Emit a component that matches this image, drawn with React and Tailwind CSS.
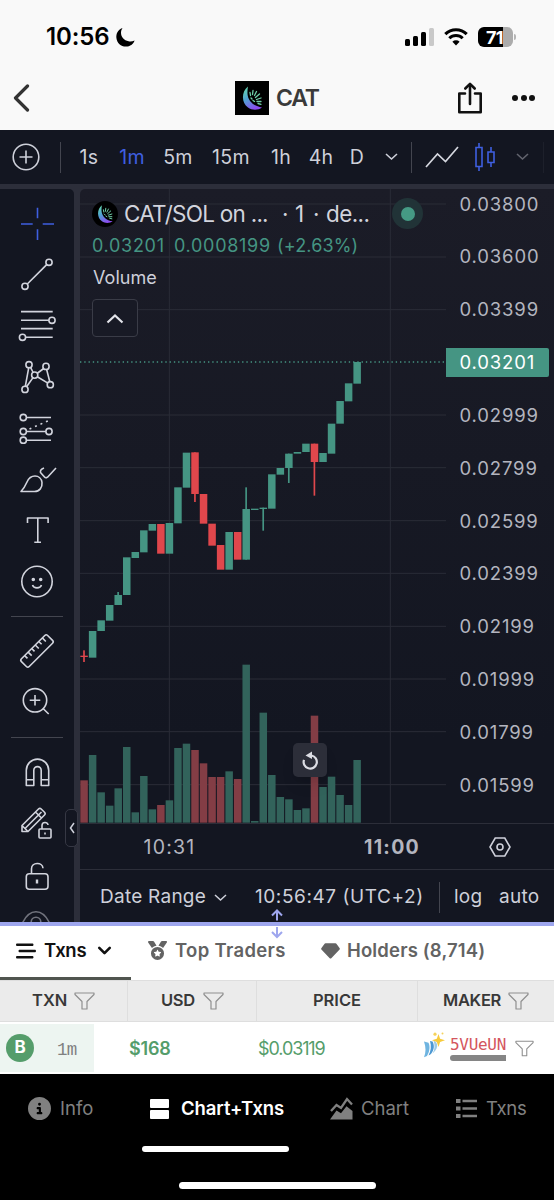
import React from 'react';
import { FaBarsStaggered, FaMedal, FaCircleInfo } from 'react-icons/fa6';
import { ChevronDown } from 'lucide-react';

const INTERVALS = [
  { label: '1s', cls: 'w-[44px]' },
  { label: '1m', cls: 'w-[42px] text-[#3f5fe0]' },
  { label: '5m', cls: 'w-[50px]' },
  { label: '15m', cls: 'w-[56px]' },
  { label: '1h', cls: 'w-[44px]' },
  { label: '4h', cls: 'w-[36px]' },
  { label: 'D', cls: 'w-[36px]' },
];

const PRICES = [
  '0.03800', '0.03600', '0.03399', '0.03201', '0.02999', '0.02799',
  '0.02599', '0.02399', '0.02199', '0.01999', '0.01799', '0.01599',
];

// [up, open/close top, open/close bottom, volume, wick top, wick bottom]
const CANDLES = [
  [0, 947, 951, 127, 931, 966],
  [1, 873, 953, 203],
  [1, 841, 873, 91],
  [1, 795, 842, 51],
  [1, 765, 795, 103, 756, 795],
  [1, 652, 765, 227],
  [1, 636, 654, 31],
  [1, 571, 637, 140],
  [1, 552, 572, 40],
  [0, 552, 641, 53],
  [1, 549, 641, 67],
  [1, 442, 550, 224],
  [1, 338, 443, 237],
  [0, 337, 462, 218, 337, 486],
  [0, 462, 551, 178],
  [0, 551, 617, 137],
  [0, 615, 689, 137],
  [1, 576, 689, 154],
  [0, 576, 659, 131],
  [1, 507, 659, 474, 442, 659],
  [1, 506, 510, 5],
  [1, 503, 507, 330, 503, 572],
  [1, 403, 506, 143],
  [1, 384, 404, 77],
  [1, 341, 384, 70, 341, 429],
  [1, 336, 341, 38],
  [1, 311, 336, 43],
  [0, 311, 366, 321, 311, 467],
  [1, 339, 366, 107],
  [1, 251, 341, 138],
  [1, 183, 251, 83],
  [1, 130, 184, 53],
  [1, 66, 131, 188],
];

const GRID_Y = [-408, -249, -91, 225, 383, 542, 700, 859, 1017, 1175, 1334];

function CatLogo({ className }) {
  return (
    <svg viewBox="0 0 34 34" className={className}>
      <defs>
        <linearGradient id="moon" x1="0" y1="0" x2="0.5" y2="1">
          <stop offset="0" stopColor="#6be0a8" />
          <stop offset="0.5" stopColor="#4fa3d0" />
          <stop offset="1" stopColor="#8a4df0" />
        </linearGradient>
      </defs>
      <rect width="34" height="34" fill="#000" />
      <path d="M13 5.5C6 11 6.500 22 13 26.500c4 3 10 3 14 0C19 25.500 13 20 12.500 13c-.1-3 0-5 .5-7.500z" fill="url(#moon)" />
      <g stroke="#6fd0a8" strokeWidth="1.300" strokeLinecap="round">
        <path d="M15.500 14.500l-.5-3M17.500 13.500l.5-4M19.500 14.500l2-4M20.500 16.500l4-3.500M21.500 18.500l4.500-1.500M22 20.500h4M23 22.500l3 .8M16 17l1 1M18 19.500l1.500 1" />
      </g>
    </svg>
  );
}

function StatusBar() {
  return (
    <div className="flex h-[66px] items-center pt-[8px] text-black">
      <span className="ml-[46px] w-[69px] text-[24px] font-semibold tracking-[-0.1px]">10:56</span>
      <svg width="19" height="19" viewBox="0 0 19 19" className="ml-px">
        <path d="M6.500 0C1.500 2 0 6 .4 10c.6 5 4.600 8.700 9.600 8.600 4 0 7.500-2.500 8.600-6.100-2 .9-4 1.200-6 .8C8 12.500 5 8.800 5 4.800 5 3 5.500 1.500 6.500 0z" />
      </svg>
      <div className="ml-[270px] flex h-[18px] items-end gap-[3px]">
        <span className="h-[7px] w-[5px] rounded-[1.500px] bg-black" />
        <span className="h-[10px] w-[5px] rounded-[1.500px] bg-black" />
        <span className="h-[14px] w-[5px] rounded-[1.500px] bg-black" />
        <span className="h-[18px] w-[5px] rounded-[1.500px] bg-[#c9c9c9]" />
      </div>
      <svg width="24" height="18" viewBox="0 0 24 18" className="ml-[10px]" fill="none" stroke="#000">
        <path d="M1.300 6.200a15.200 15.200 0 0 1 21.400 0" strokeWidth="3.100" />
        <path d="M5.300 10.300a9.600 9.600 0 0 1 13.400 0" strokeWidth="3" />
        <path d="M12 17.500l-3.600-3.700a5.200 5.200 0 0 1 7.200 0z" fill="#000" stroke="none" />
      </svg>
      <div className="ml-[10px] flex h-5 w-[35px] items-center overflow-hidden rounded-[6px] bg-[linear-gradient(90deg,#000_72%,#acacac_72%)] pl-[8px] text-[18px] font-bold tracking-[-0.8px] text-white">
        71
      </div>
      <span className="ml-[1px] h-[6px] w-[2px] rounded-r-full bg-[#b5b5b5]" />
    </div>
  );
}

function NavBar() {
  return (
    <div className="flex h-[64px] items-center">
      <svg width="18" height="28" viewBox="0 0 18 28" className="ml-[13px]" fill="none" stroke="#333" strokeWidth="3.200" strokeLinecap="round" strokeLinejoin="round">
        <path d="M14.500 2L2.500 14l12 12" />
      </svg>
      <CatLogo className="ml-[204px] h-[34px] w-[34px]" />
      <span className="ml-[7px] w-[60px] text-[23px] font-semibold tracking-[-1.200px] text-[#3a3a3a]">CAT</span>
      <svg width="26" height="34" viewBox="0 0 26 34" className="ml-[121px]" fill="none" stroke="#111" strokeWidth="2.600">
        <path d="M8 12.500H2.300v18.700h21.400V12.500H18M13 23V4" strokeLinejoin="round" strokeLinecap="round" />
        <path d="M8.300 7.500L13 2.800l4.700 4.700" strokeLinejoin="round" strokeLinecap="round" />
      </svg>
      <div className="ml-[29px] flex gap-[2.500px]">
        <span className="h-[6px] w-[6px] rounded-full bg-[#111]" />
        <span className="h-[6px] w-[6px] rounded-full bg-[#111]" />
        <span className="h-[6px] w-[6px] rounded-full bg-[#111]" />
      </div>
    </div>
  );
}

function IntervalBar() {
  return (
    <div className="flex h-[54px] items-center bg-[#131621] text-[19.500px] tracking-[0.3px] text-[#ced0da]">
      <svg width="28" height="28" viewBox="0 0 28 28" className="ml-[12px]" fill="none" stroke="#ced0da" strokeWidth="1.600">
        <circle cx="14" cy="14" r="12.800" />
        <path d="M14 7.500v13M7.500 14h13" />
      </svg>
      <span className="ml-[20px] h-[31px] w-px bg-[#43454f]" />
      <div className="ml-[6px] mr-px flex pt-px">
        {INTERVALS.map((it) => (
          <span key={it.label} className={`text-center ${it.cls}`}>{it.label}</span>
        ))}
      </div>
      <span className="flex w-[30px] justify-center">
        <svg width="13" height="8" viewBox="0 0 13 8" fill="none" stroke="#ced0da" strokeWidth="1.600"><path d="M1 1l5.500 5L12 1" /></svg>
      </span>
      <span className="ml-[5px] h-[31px] w-px bg-[#43454f]" />
      <svg width="34" height="22" viewBox="0 0 34 22" className="ml-[13px]" fill="none" stroke="#d5d7df" strokeWidth="1.700">
        <path d="M1 21L12.500 8l8 7.500L33 1" />
      </svg>
      <svg width="22" height="30" viewBox="0 0 22 30" className="ml-[15px]" fill="none" stroke="#3f5fe0" strokeWidth="1.600">
        <path d="M2 5.500h6v19H2zM5 1v4.500M5 24.500V29M14 10h6v10.500h-6zM17 5v5M17 20.500V25" />
      </svg>
      <svg width="13" height="8" viewBox="0 0 13 8" className="ml-[20px]" fill="none" stroke="#62646e" strokeWidth="1.600"><path d="M1 1l5.500 5L12 1" /></svg>
      <span className="ml-[14px] h-[31px] w-px bg-[#1d202b]" />
    </div>
  );
}

function Tool({ children, className = 'h-[51.200px]', color = '#d2d4dd' }) {
  return (
    <div className={`flex w-[74px] shrink-0 items-center justify-center ${className}`}>
      <svg width="40" height="40" viewBox="0 0 40 40" fill="none" stroke={color} strokeWidth="1.600" strokeLinejoin="round">
        {children}
      </svg>
    </div>
  );
}

function Sidebar() {
  return (
    <div className="relative mr-[6px] w-[74px] shrink-0">
      <div className="flex h-[733px] flex-col overflow-hidden rounded-tr-[5px] bg-[#131621] pt-[8.400px]">
        <Tool color="#3f5fe0">
          <path d="M20.500 4.700v10.600M20.500 26.300V37M4 21h11.700M25.700 21H37" />
        </Tool>
        <Tool>
          <path d="M10.300 30L29.700 10.600" />
          <circle cx="8" cy="32.300" r="3.100" />
          <circle cx="32" cy="8.300" r="3.100" />
        </Tool>
        <Tool>
          <path d="M4 6.600h31.700M4 15.300h28M4 23.600h31.700M8 32.300h27.700" />
          <circle cx="35" cy="15.300" r="3.100" />
          <circle cx="5.500" cy="32.300" r="3.100" />
        </Tool>
        <Tool>
          <path d="M11.700 10.800L8.300 29.300M13.600 10.300l2.500 5.200M20 16.500l6.700-5M16 20.600L9.600 29.800M29.600 12.400l3.200 12.300M20.300 19.700l10.600 6.400" />
          <circle cx="12" cy="7.700" r="3.100" />
          <circle cx="29" cy="9.400" r="3.100" />
          <circle cx="17.700" cy="18.100" r="3.100" />
          <circle cx="8" cy="32.400" r="3.100" />
          <circle cx="33.300" cy="27.700" r="3.100" />
        </Tool>
        <Tool>
          <path d="M9.400 9.500H34M9.400 23.500h19.500M9.400 32.200H34" />
          <path d="M12.500 21L33 12" strokeDasharray="2 4" />
          <circle cx="6.300" cy="9.500" r="3.100" />
          <circle cx="6.300" cy="23.500" r="3.100" />
          <circle cx="32" cy="23.500" r="3.100" />
          <circle cx="6.300" cy="32.200" r="3.100" />
        </Tool>
        <Tool>
          <path d="M4 32.500h13.500c5 0 8-4 7.500-9-.5-4-3.500-6.500-7-6.500-4 0-6.500 2.500-8 6C8 27.500 6.500 30 4 32.500z" />
          <path d="M27 9c-2.500 1-4 2.500-3.500 4.500l4 4.600c.8.9 2 1 3 .1L39 9" />
        </Tool>
        <Tool>
          <path d="M10.500 13V8h20.600v5M20.800 8v24.300M17.300 32.300H24" />
        </Tool>
        <Tool>
          <circle cx="20" cy="20.500" r="15.200" />
          <circle cx="16.300" cy="18.500" r="1" fill="#d2d4dd" />
          <circle cx="23.700" cy="18.500" r="1" fill="#d2d4dd" />
          <path d="M15.500 24c1.200 3.800 7.800 3.800 9 0" />
        </Tool>
        <span className="ml-[11px] mt-[9px] h-px w-[52px] shrink-0 bg-[#43454f]" />
        <Tool className="mt-[9px] h-[50px]">
          <g transform="rotate(-45 20 20)">
            <rect x="1.500" y="14.500" width="37" height="11" rx="2" />
            <path d="M8 14.500v4M13 14.500v5M18 14.500v4M23 14.500v5M28 14.500v4M33 14.500v5" />
          </g>
        </Tool>
        <Tool className="h-[50px]">
          <circle cx="18" cy="19.300" r="11.700" />
          <path d="M18 14v10.600M12.700 19.300h10.600M26.300 27.700l5.400 5.300" />
        </Tool>
        <span className="ml-[11px] mt-[11px] h-px w-[52px] shrink-0 bg-[#43454f]" />
        <Tool className="mt-[8px] h-[52px]">
          <path d="M9.300 33.500V18.300a11.200 11.200 0 0 1 22.400 0v15.200h-7.500V18.300a3.700 3.700 0 0 0-7.400 0v15.200zM9.300 27.700h7.500M24.200 27.700h7.500" />
        </Tool>
        <Tool className="h-[52px]">
          <path d="M5 27.500v-6L21.500 5c.8-.8 1.900-.8 2.700 0l3.300 3.300c.8.800.8 1.900 0 2.700L11 27.500zM5 21.500l6 6M8.500 24L24.500 8M18.500 8l6 6" />
          <rect x="22" y="25" width="12" height="9" rx="1" />
          <path d="M25 25v-3.500c0-4 6-4 6-.5M28 28.500v2" />
        </Tool>
        <Tool className="h-[52px]">
          <rect x="9.300" y="17.700" width="21.700" height="15.500" rx="3" />
          <path d="M14.500 17.700v-5c0-6.500 11-7 11.500-.5" />
          <path d="M20 23.500v4" strokeWidth="2.400" />
        </Tool>
        <Tool className="h-[40px]" color="#71737d">
          <path d="M5.500 21C9 13.500 13.500 9.700 19 9.700S29 13.500 32.500 21C29 28 24.500 32 19 32S9 28 5.500 21z" />
          <circle cx="19" cy="20" r="4.800" />
        </Tool>
      </div>
      <div className="absolute left-[65px] top-[620px] flex h-[38px] w-[13px] items-center justify-center rounded-[5px] border border-[#363844] bg-[#131621]">
        <svg width="6" height="12" viewBox="0 0 6 12" fill="none" stroke="#ced0da" strokeWidth="1.500"><path d="M5 1L1.500 6 5 11" /></svg>
      </div>
    </div>
  );
}

function Plot() {
  return (
    <svg width="366" height="634" viewBox="12 -453 1098 1902" className="block">
      <g stroke="#2a2c37" strokeWidth="3">
        {GRID_Y.map((y) => (
          <path key={y} d={`M12 ${y}H1110`} />
        ))}
        <path d="M280 -453V1449M943 -453V1449" />
      </g>
      {CANDLES.map(([up, top, bottom, vol, high, low], i) => {
        const x = 13 + i * 25.6;
        return (
          <g key={i}>
            <rect x={x} y={1448 - vol} width="22.500" height={vol} fill={up ? '#32635b' : '#833d45'} />
            {high && <rect x={x + 8.5} y={high} width="5" height={low - high} fill={up ? '#459583' : '#e0474c'} />}
            <rect x={x} y={top} width="22.500" height={bottom - top} fill={up ? '#459583' : '#e0474c'} />
          </g>
        );
      })}
      <path d="M12 66H1110" stroke="#459583" strokeWidth="4" strokeDasharray="4 8.800" />
    </svg>
  );
}

function Legend() {
  return (
    <div className="absolute left-0 top-0 pl-[12px] pt-[9px]">
      <div className="flex h-[31px] items-center text-[22.500px] tracking-[-0.1px] text-[#d2d4dd]">
        <CatLogo className="h-[26px] w-[26px] rounded-full" />
        <span className="ml-[6px] w-[158px] whitespace-nowrap tracking-[-0.750px]">CAT/SOL on ...</span>
        <span className="w-[13px]">·</span>
        <span className="w-[18px]">1</span>
        <span className="w-[13px]">·</span>
        <span className="w-[66px] tracking-[-0.6px]">de...</span>
        <span className="flex h-[31px] w-[31px] items-center justify-center rounded-full bg-[#213337]">
          <span className="h-[14px] w-[14px] rounded-full bg-[#459a84]" />
        </span>
      </div>
      <div className="mt-[3px] flex h-[27px] items-center text-[18px] tracking-[0.7px] text-[#459583]">
        <span className="w-[82px]">0.03201</span>
        <span className="w-[103px]">0.0008199</span>
        <span className="tracking-[0.150px]">(+2.63%)</span>
      </div>
      <div className="mt-[6px] pl-px text-[18px] leading-[26px] tracking-[0.050px] text-[#ced0da]">Volume</div>
      <div className="mt-[8px] flex h-[38px] w-[46px] items-center justify-center rounded-[4px] border border-[#3a3c47] bg-[#181a25]">
        <svg width="18" height="11" viewBox="0 0 18 11" fill="none" stroke="#e3e4ea" strokeWidth="2.200"><path d="M1.500 9.500L9 2.500l7.500 7" /></svg>
      </div>
    </div>
  );
}

function Chart() {
  return (
    <div className="flex flex-1 flex-col overflow-hidden rounded-tl-[5px] bg-[linear-gradient(#1b1c27_0,#131621_75%)]">
      <div className="flex h-[634px]">
        <div className="relative w-[366px] shrink-0">
          <Plot />
          <Legend />
          <div className="absolute left-[213px] top-[554px] flex h-[34px] w-[34px] items-center justify-center rounded-[5px] bg-[#2c2e39] shadow-lg">
            <svg width="17" height="19" viewBox="0 0 17 19" fill="none" stroke="#dcdde4" strokeWidth="2.200">
              <path d="M2 8.800A6.600 6.600 0 1 0 9.500 4.500" />
              <path d="M10 .5v7.500L3.500 4.500z" fill="#dcdde4" stroke="none" />
            </svg>
          </div>
        </div>
        <div className="-mt-[10.900px] flex h-[634px] flex-col text-[18.500px] tracking-[0.850px] text-[#b3b5bf]">
          {PRICES.map((p) => (
            <div key={p} className="flex h-[52.820px] w-[108px] shrink-0 items-center">
              <span
                className={
                  p === '0.03201'
                    ? 'flex h-[29px] w-[103px] items-center rounded-r-[2px] bg-[#459583] pl-[13.500px] text-white'
                    : 'pl-[13.500px]'
                }
              >
                {p}
              </span>
            </div>
          ))}
        </div>
      </div>
      <div className="flex h-[47px] items-center border-y border-[#2c2e39] text-[19.500px] text-[#b3b5bf]">
        <span className="w-[179px] pt-[3px] text-center tracking-[1.200px]">10:31</span>
        <span className="ml-[88px] w-[90px] pt-[3px] text-center font-bold tracking-[1.300px]">11:00</span>
        <svg width="22" height="20" viewBox="0 0 22 20" className="ml-[52px]" fill="none" stroke="#ced0da" strokeWidth="1.600">
          <path d="M6.200 1h9.600L21 10l-5.200 9H6.200L1 10z" />
          <circle cx="11" cy="10" r="3" />
        </svg>
      </div>
      <div className="flex flex-1 items-center whitespace-nowrap pt-[3px] text-[19px] tracking-[0.250px] text-[#ced0da]">
        <span className="ml-[20px] w-[114px]">Date Range</span>
        <svg width="13" height="8" viewBox="0 0 13 8" fill="none" stroke="#ced0da" strokeWidth="1.500"><path d="M1 1l5.500 5L12 1" /></svg>
        <span className="ml-[28px] w-[184px] tracking-[0.580px]">10:56:47 (UTC+2)</span>
        <span className="h-[31px] w-px shrink-0 bg-[#43454f]" />
        <span className="ml-[14px] w-[45px]">log</span>
        <span>auto</span>
      </div>
    </div>
  );
}

function ResizeHandle() {
  return (
    <div className="relative h-[4px] bg-[#9ea6ee]">
      <svg width="14" height="30" viewBox="0 0 14 30" className="absolute -top-[13px] left-[270px]" fill="none" stroke="#9ea6ee" strokeWidth="2">
        <path d="M7 11.500V2M2 6.500l5-5 5 5M7 18v9M2 23l5 5 5-5" />
      </svg>
    </div>
  );
}

function Funnel({ className }) {
  return (
    <svg viewBox="0 0 21 18" className={className} fill="none" stroke="#8f8f8f" strokeWidth="1.200" strokeLinejoin="round">
      <path d="M1 1h19v1.500L13 9.500V17H8V9.500L1 2.500z" />
    </svg>
  );
}

function Tabs() {
  return (
    <div className="flex h-[54px] items-center bg-white pb-[5px] text-[18.500px] font-semibold text-[#636363]">
      <div className="relative flex h-[49px] w-[131px] items-center text-[#111]">
        <FaBarsStaggered className="ml-[16px] h-[20px] w-[20px]" />
        <span className="ml-[8px] w-[52px] tracking-[-0.3px]">Txns</span>
        <ChevronDown className="-ml-[2px] h-[21px] w-[21px]" strokeWidth={3} />
        <span className="absolute -bottom-[5px] left-0 h-[3px] w-[131px] bg-[#50554f]" />
      </div>
      <FaMedal className="ml-[17px] h-[19px] w-[19px]" />
      <span className="ml-[8px] w-[111px] whitespace-nowrap tracking-[0.320px]">Top Traders</span>
      <svg width="19" height="16" viewBox="0 0 19 16" className="ml-[35px]" fill="#636363">
        <path d="M4.500.3h10c.4 0 .7.2.9.5l3.300 4.500c.3.400.2.900-.1 1.200l-8.300 8.700c-.4.500-1.200.5-1.600 0L.4 6.500c-.3-.3-.4-.8-.1-1.200L3.600.8c.2-.3.500-.5.9-.5z" />
      </svg>
      <span className="ml-[7px] whitespace-nowrap tracking-[0.150px]">Holders (8,714)</span>
    </div>
  );
}

function TxnTable() {
  return (
    <div className="bg-white">
      <div className="grid h-[42px] grid-cols-[128px_129px_161px_136px] border-b border-t border-[#dedede] bg-[#ebebeb] text-[16.500px] font-semibold text-[#383838] [&_span]:-mt-px">
        <div className="flex items-center border-r border-[#dedede] pl-[32px]">
          <span className="w-[42px]">TXN</span>
          <Funnel className="h-[18px] w-[21px]" />
        </div>
        <div className="flex items-center border-r border-[#dedede] pl-[33px]">
          <span className="w-[42px] tracking-[-0.3px]">USD</span>
          <Funnel className="h-[18px] w-[21px]" />
        </div>
        <div className="flex items-center justify-center border-r border-[#dedede]"><span>PRICE</span></div>
        <div className="flex items-center pl-[25px]">
          <span className="w-[65px] tracking-[-0.3px]">MAKER</span>
          <Funnel className="h-[18px] w-[21px]" />
        </div>
      </div>
      <div className="flex h-[52px] items-center text-[18px] text-[#559d6b]">
        <div className="flex h-[48px] w-[94px] items-center bg-[#edf5f1]">
          <span className="ml-[6px] flex h-[28px] w-[28px] items-center justify-center rounded-full bg-[#559d6b] text-[17px] font-bold text-white">B</span>
          <span className="ml-[23px] pt-[4px] font-['Liberation_Mono',monospace] text-[17.500px] tracking-[-0.8px] text-[#808080]">1m</span>
        </div>
        <span className="ml-[35px] w-[129px] font-semibold tracking-[-0.2px]">$168</span>
        <span className="w-[165px] tracking-[-1.100px]">$0.03119</span>
        <svg width="23" height="26" viewBox="0 0 23 26" className="-mt-[6px]">
          <path d="M1 9.500l4.500 1.200c1.500 3 1.700 8-1.500 13.300L1 25.300c2-5 2-10 0-15.800z" fill="#6fb4e0" />
          <path d="M7 9l2.500.5c2 3.500 2 8-1.500 12.500l-2.500 1.500C8 19 8.500 14 7 9z" fill="#4b98d3" />
          <path d="M10.500 8.500l2.500 1.500c2 3 1.500 6-1 9l-2.500 2.500c2.500-4 2.500-8.500 1-13z" fill="#9ccbe6" />
          <path d="M15.500 2l1.600 4.700 4.900 1.600-4.900 1.700-1.600 4.900-1.700-4.900L9 8.300l4.800-1.600z" fill="#f7cb3c" />
          <circle cx="12" cy="2.200" r="1.600" fill="#f5d25c" />
          <circle cx="19.500" cy="1.500" r="1" fill="#f5d25c" />
        </svg>
        <div className="ml-[4px] mt-[1px] w-[56px] font-['DejaVu_Sans_Mono',monospace] text-[16px] leading-[17px] tracking-[-0.3px] text-[#d4565e]">
          5VUeUN
          <div className="mt-[2px] h-[6px] w-[56px] rounded-l-full bg-[#858585]" />
        </div>
        <Funnel className="ml-[9px] h-[17px] w-[19px]" />
      </div>
    </div>
  );
}

function BottomNav() {
  return (
    <div className="h-[126px] bg-black text-[#808080]">
      <div className="flex h-[70px] items-center whitespace-nowrap text-[18.500px] [&>svg]:-mt-px">
        <FaCircleInfo className="ml-[28px] h-[23px] w-[23px]" />
        <span className="ml-[9px] w-[90px]">Info</span>
        <span className="flex flex-col gap-[2px]">
          <span className="h-[9px] w-[19px] rounded-[1px] bg-white" />
          <span className="h-[9px] w-[19px] rounded-[1px] bg-white" />
        </span>
        <span className="ml-[12px] w-[149px] font-semibold tracking-[-0.080px] text-white">Chart+Txns</span>
        <svg width="23" height="23" viewBox="0 0 23 23" fill="none" stroke="#808080" strokeWidth="2.300">
          <path d="M1 14l5.500-6 4.500 3 6-9 5 5.500" />
          <path d="M0 22.500l6.500-9 4.500 2.700 5.500-7 6 4.800v8.500z" fill="#808080" stroke="none" />
        </svg>
        <span className="ml-[8px] w-[95px]">Chart</span>
        <svg width="21" height="19" viewBox="0 0 21 19" fill="#808080">
          <path d="M0 0h4.500v4H0zM0 7.500h4.500v4H0zM0 15h4.500v4H0zM6.500.8h14.500v2.400H6.500zM6.500 8.300h14.500v2.400H6.500zM6.500 15.800h14.500v2.400H6.500z" />
        </svg>
        <span className="ml-[9px] tracking-[-0.3px]">Txns</span>
      </div>
      <div className="ml-[142px] mt-[2px] h-[6px] w-[147px] rounded-full bg-white" />
      <div className="ml-[179px] mt-[30px] h-[7px] w-[197px] rounded-full bg-white" />
    </div>
  );
}

export default function App() {
  return (
    <div className="h-[1200px] w-[554px] overflow-hidden bg-[#f9f9f9] font-['Inter',sans-serif]">
      <StatusBar />
      <NavBar />
      <IntervalBar />
      <div className="flex h-[738px] bg-[#2c2e3a] pt-[5px]">
        <Sidebar />
        <Chart />
      </div>
      <ResizeHandle />
      <Tabs />
      <TxnTable />
      <BottomNav />
    </div>
  );
}
